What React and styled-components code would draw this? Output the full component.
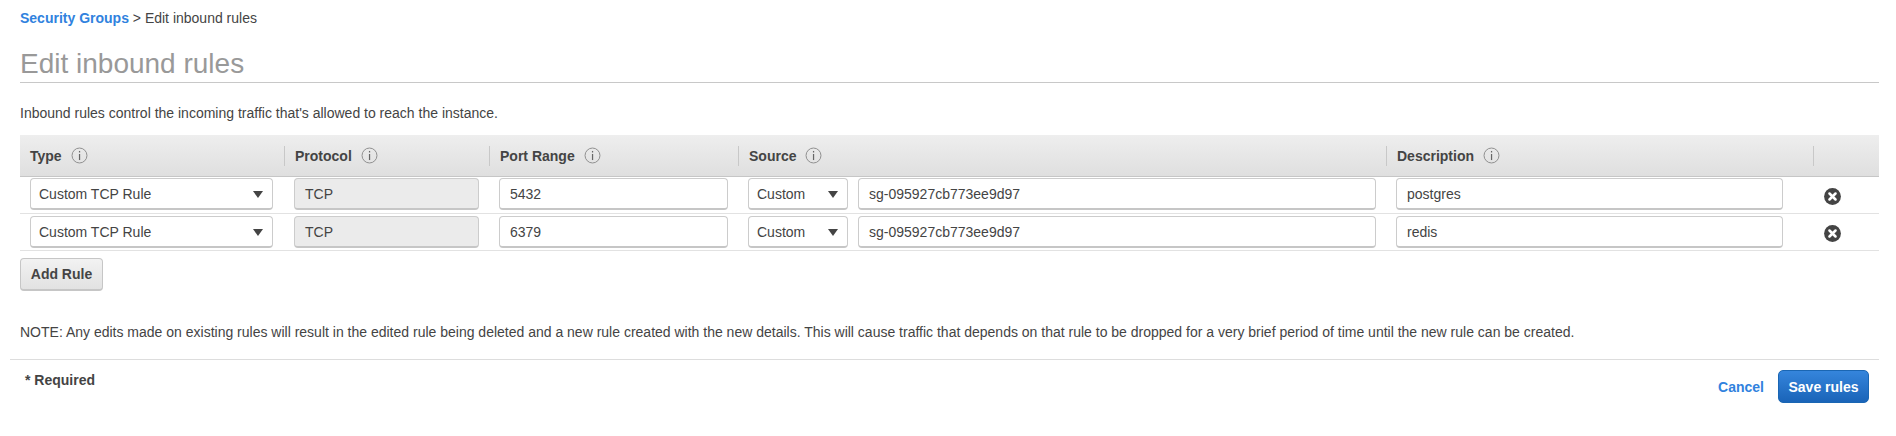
import React from "react";
import styled, { createGlobalStyle } from "styled-components";

const GlobalStyle = createGlobalStyle`
    html, body {
        margin: 0;
        padding: 0;
        background: #ffffff;
    }
    body {
        font-family: "Liberation Sans", Arial, sans-serif;
        font-size: 14px;
        color: #444444;
    }
`;

const COLUMNS = "264px 205px 249px 648px 427px 66px";

const rules = [
    { port: "5432", source: "sg-095927cb773ee9d97", description: "postgres" },
    { port: "6379", source: "sg-095927cb773ee9d97", description: "redis" },
];

function InfoIcon() {
    return (
        <InfoSvg viewBox="0 0 18 18" aria-hidden="true">
            <circle cx="9" cy="9" r="7.9" fill="none" stroke="#8a8a8a" strokeWidth="1" />
            <rect x="8.4" y="7.4" width="1.3" height="6.4" fill="#666666" />
            <rect x="8.4" y="4.2" width="1.3" height="1.6" fill="#666666" />
        </InfoSvg>
    );
}

function RemoveIcon() {
    return (
        <svg width="17" height="17" viewBox="0 0 18 18" aria-hidden="true">
            <circle cx="9" cy="9" r="8.9" fill="#444444" />
            <path d="M5.8 5.8l6.4 6.4M12.2 5.8l-6.4 6.4" stroke="#ffffff" strokeWidth="2.7" strokeLinecap="round" />
        </svg>
    );
}

function Select({ value, $width }) {
    return (
        <SelectBox $width={$width}>
            <span>{value}</span>
            <Caret />
        </SelectBox>
    );
}

export default function App() {
    return (
        <Page>
            <GlobalStyle />
            <Content>
                <Breadcrumb>
                    <BreadcrumbLink>Security Groups</BreadcrumbLink> &gt; Edit inbound rules
                </Breadcrumb>
                <Title>Edit inbound rules</Title>
                <Intro>Inbound rules control the incoming traffic that's allowed to reach the instance.</Intro>
                <TableHead>
                    <HeadCell>Type <InfoIcon /></HeadCell>
                    <HeadCell $divider>Protocol <InfoIcon /></HeadCell>
                    <HeadCell $divider>Port Range <InfoIcon /></HeadCell>
                    <HeadCell $divider>Source <InfoIcon /></HeadCell>
                    <HeadCell $divider>Description <InfoIcon /></HeadCell>
                    <HeadCell $divider />
                </TableHead>
                {rules.map((rule, index) => (
                    <Row key={rule.port} $first={index === 0}>
                        <Cell>
                            <Select value="Custom TCP Rule" $width="243px" />
                        </Cell>
                        <Cell>
                            <DisabledField>TCP</DisabledField>
                        </Cell>
                        <Cell>
                            <Field $width="229px">{rule.port}</Field>
                        </Cell>
                        <Cell>
                            <SourceGroup>
                                <Select value="Custom" $width="100px" />
                                <Field $width="518px">{rule.source}</Field>
                            </SourceGroup>
                        </Cell>
                        <Cell>
                            <Field $width="387px">{rule.description}</Field>
                        </Cell>
                        <RemoveCell $first={index === 0}>
                            <RemoveIcon />
                        </RemoveCell>
                    </Row>
                ))}
                <AddButton>Add Rule</AddButton>
                <Note>
                    NOTE: Any edits made on existing rules will result in the edited rule being deleted and a new rule created with the new details. This will cause traffic that depends on that rule to be dropped for a very brief period of time until the new rule can be created.
                </Note>
            </Content>
            <Footer>
                <Required>* Required</Required>
                <Actions>
                    <CancelLink>Cancel</CancelLink>
                    <SaveButton>Save rules</SaveButton>
                </Actions>
            </Footer>
        </Page>
    );
}

const Page = styled.div`
    width: 1896px;
    height: 436px;
    overflow: hidden;
    padding-top: 10px;
    box-sizing: border-box;
`;
const Content = styled.div`
    margin: 0 17px 0 20px;
`;
const Breadcrumb = styled.div`
    font-size: 14px;
    line-height: 16px;
    color: #444444;
`;
const BreadcrumbLink = styled.a`
    color: #3082de;
    font-weight: 700;
`;
const Title = styled.h1`
    margin: 20px 0 0;
    font-size: 28px;
    line-height: 36px;
    font-weight: 400;
    color: #999999;
    height: 37px;
    box-sizing: border-box;
    border-bottom: 1px solid #c8c8c8;
`;
const Intro = styled.p`
    margin: 22px 0 0;
    font-size: 14px;
    line-height: 16px;
    color: #444444;
`;
const TableHead = styled.div`
    display: grid;
    grid-template-columns: ${COLUMNS};
    align-items: center;
    height: 42px;
    margin-top: 14px;
    box-sizing: border-box;
    background: linear-gradient(#eeeeee, #dfdfdf);
    border-bottom: 1px solid #c6c6c6;
`;
const HeadCell = styled.div`
    display: flex;
    align-items: center;
    gap: 9px;
    height: 20px;
    padding-left: 10px;
    font-size: 14px;
    font-weight: 700;
    color: #444444;
    border-left: ${(props) => (props.$divider ? "1px solid #c8c8c8" : "none")};
`;
const InfoSvg = styled.svg`
    width: 17px;
    height: 17px;
`;
const Row = styled.div`
    display: grid;
    grid-template-columns: ${COLUMNS};
    align-items: start;
    height: 37px;
    padding-top: ${(props) => (props.$first ? "1px" : "2px")};
    box-sizing: border-box;
    border-bottom: 1px solid #e2e2e2;
`;
const Cell = styled.div`
    padding-left: 10px;
    min-width: 0;
`;
const RemoveCell = styled.div`
    display: flex;
    padding-left: 11px;
    margin-top: ${(props) => (props.$first ? "10px" : "9px")};
`;
const controlBase = `
    height: 32px;
    box-sizing: border-box;
    border-radius: 4px;
    border: 1px solid #cccccc;
    border-bottom: 2px solid #c6c6c6;
    font-size: 14px;
    color: #444444;
    display: flex;
    align-items: center;
`;
const SelectBox = styled.div`
    ${controlBase}
    width: ${(props) => props.$width};
    justify-content: space-between;
    padding: 0 9px 0 8px;
    background: #ffffff;
`;
const Caret = styled.i`
    width: 0;
    height: 0;
    margin-top: 1px;
    border-left: 5.5px solid transparent;
    border-right: 5.5px solid transparent;
    border-top: 7px solid #444444;
`;
const Field = styled.div`
    ${controlBase}
    width: ${(props) => props.$width};
    padding: 0 10px;
    background: #ffffff;
`;
const DisabledField = styled.div`
    ${controlBase}
    width: 185px;
    padding: 0 10px;
    background: #ebebeb;
`;
const SourceGroup = styled.div`
    display: flex;
    gap: 10px;
`;
const AddButton = styled.button`
    display: block;
    width: 83px;
    height: 33px;
    margin-top: 7px;
    padding: 0;
    border: 1px solid #c6c6c6;
    border-bottom-width: 2px;
    border-radius: 4px;
    background: linear-gradient(#f2f2f2, #e2e2e2);
    font-family: inherit;
    font-size: 14px;
    font-weight: 700;
    color: #444444;
`;
const Note = styled.p`
    margin: 33px 0 0;
    font-size: 14px;
    line-height: 16px;
    color: #444444;
    white-space: nowrap;
`;
const Footer = styled.div`
    display: flex;
    justify-content: space-between;
    align-items: flex-start;
    margin: 19px 17px 0 10px;
    border-top: 1px solid #dddddd;
    padding: 10px 10px 0 15px;
`;
const Required = styled.div`
    font-size: 14px;
    font-weight: 700;
    line-height: 16px;
    margin-top: 2px;
`;
const Actions = styled.div`
    display: flex;
    align-items: center;
    gap: 14px;
`;
const CancelLink = styled.a`
    font-size: 14px;
    font-weight: 700;
    color: #3082de;
`;
const SaveButton = styled.button`
    width: 91px;
    height: 33px;
    padding: 0;
    border: 1px solid #1a66b3;
    border-radius: 5px;
    background: linear-gradient(#3585dc, #1a64b8);
    font-family: inherit;
    font-size: 14px;
    font-weight: 700;
    color: #ffffff;
`;
